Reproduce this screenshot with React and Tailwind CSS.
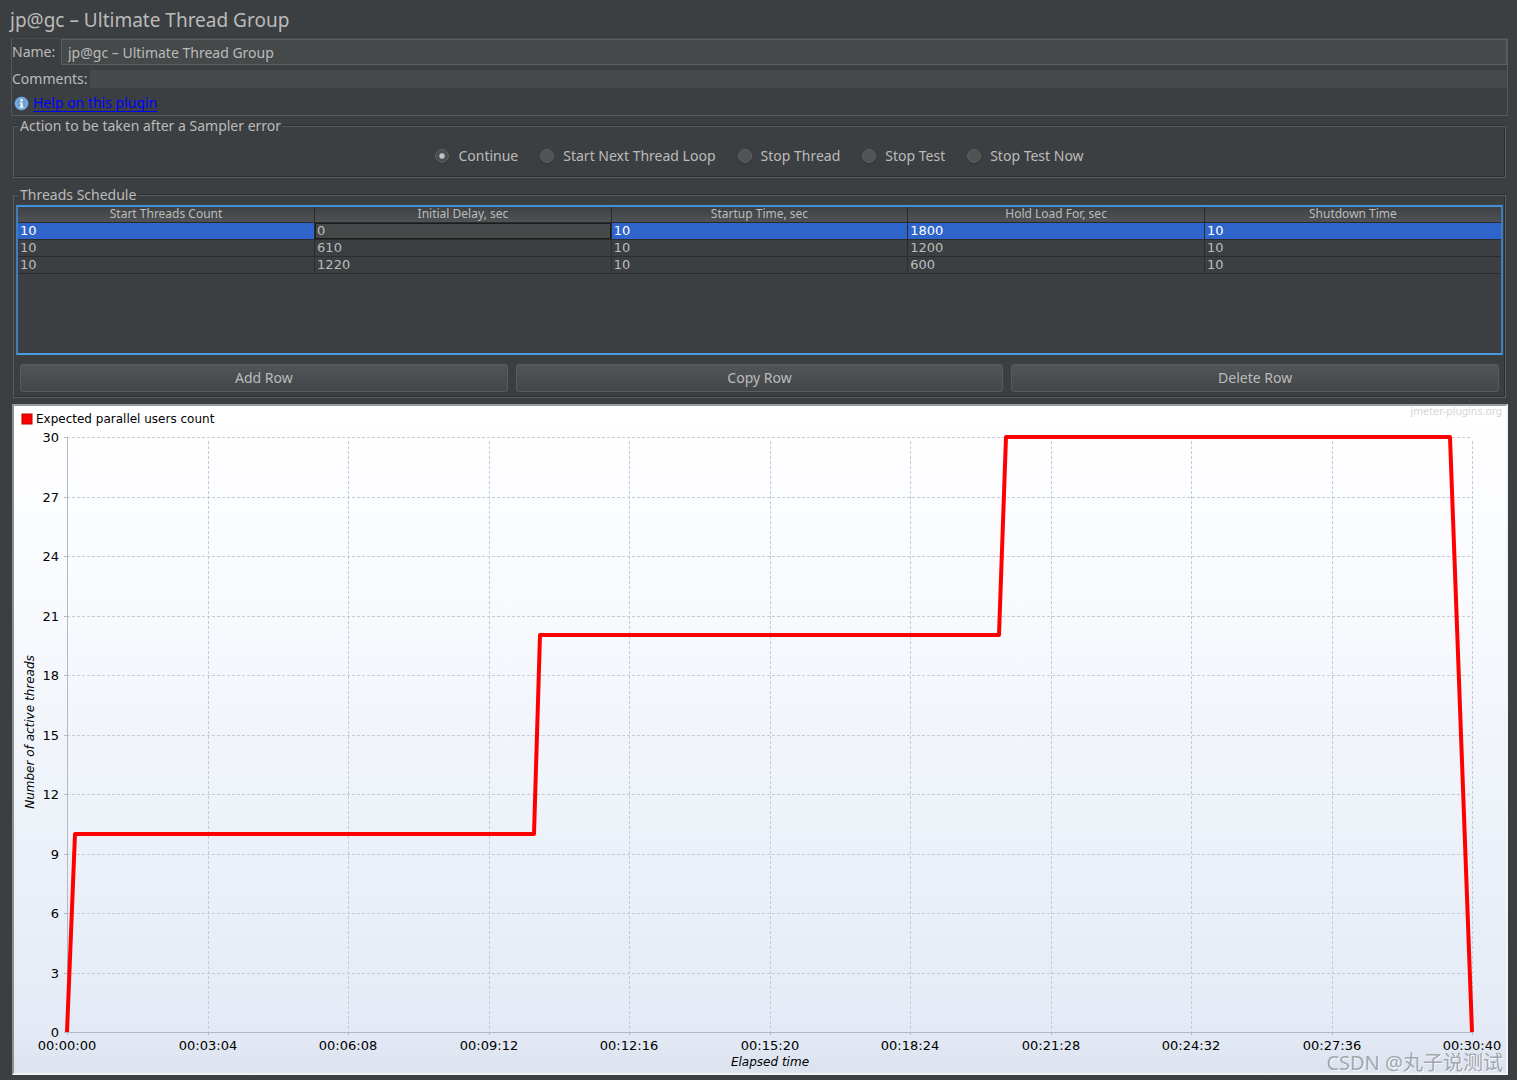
import React, { useState } from 'react';

const errorActions = ['Continue', 'Start Next Thread Loop', 'Stop Thread', 'Stop Test', 'Stop Test Now'];

const columns = ['Start Threads Count', 'Initial Delay, sec', 'Startup Time, sec', 'Hold Load For, sec', 'Shutdown Time'];

const schedule = [
  [10, 0, 10, 1800, 10],
  [10, 610, 10, 1200, 10],
  [10, 1220, 10, 600, 10],
];

// seconds, active threads
const series = [
  [0, 0],
  [10, 10],
  [611, 10],
  [620, 20],
  [1220, 20],
  [1230, 30],
  [1811, 30],
  [1840, 0],
];

const plot = { left: 53, right: 1458, top: 31, bottom: 626 };
const timeLabels = [
  '00:00:00',
  '00:03:04',
  '00:06:08',
  '00:09:12',
  '00:12:16',
  '00:15:20',
  '00:18:24',
  '00:21:28',
  '00:24:32',
  '00:27:36',
  '00:30:40',
];
const threadLabels = [0, 3, 6, 9, 12, 15, 18, 21, 24, 27, 30];

const toX = (seconds) => Math.round(plot.left + ((plot.right - plot.left) * seconds) / 1840);
const toY = (threads) => Math.round(plot.bottom - ((plot.bottom - plot.top) * threads) / 30);

const InfoIcon = () => (
  <svg width="15" height="15" viewBox="0 0 16 16" aria-hidden="true">
    <circle cx="8" cy="8" r="7.5" fill="#4a83bd" />
    <circle cx="8" cy="8" r="6.2" fill="#6fa0d4" stroke="#a9c8e8" strokeWidth="0.8" />
    <circle cx="8" cy="4.6" r="1.3" fill="#fff" />
    <path d="M6.2 6.8h2.9v4.4h1v1.2H6v-1.2h1.1V8h-.9z" fill="#fff" />
  </svg>
);

const Group = ({ title, className, children }) => (
  <fieldset
    className={`mr-[2px] ml-px min-w-0 border border-[#5b5e60] shadow-[inset_-1px_-1px_0_#2c2e30,0_-1px_0_#2c2e30] ${className}`}
  >
    <legend className="ml-1 bg-[#3c3f41] px-[2px] text-sm leading-4">{title}</legend>
    {children}
  </fieldset>
);

const ScheduleTable = () => (
  <div className="mx-[2px] h-[150px] border-2 border-[#3d7fbd] border-t-[#4391d8] border-b-[#4a9be0]">
    <table className="w-full table-fixed border-collapse">
      <thead>
        <tr className="bg-linear-to-b from-[#3f4244] to-[#4e5254]">
          {columns.map((name) => (
            <th
              key={name}
              className="h-[15px] border-r border-b border-[#2b2b2b] p-0 text-center text-xs leading-[14px] font-normal last:border-r-0"
            >
              {name}
            </th>
          ))}
        </tr>
      </thead>
      <tbody>
        {schedule.map((row, r) => (
          <tr key={r} className={r === 0 ? 'bg-[#2f65ca] text-white' : ''}>
            {row.map((value, c) => (
              <td
                key={c}
                className={`border-r border-b border-[#2b2b2b] py-0 pr-0 pl-[2px] font-['DejaVu_Sans',sans-serif] text-[13px] leading-4 last:border-r-0 ${
                  r === 0 && c === 1 ? 'bg-[#45494a] text-[#bbbbbb] shadow-[inset_0_0_0_1px_#1c1c1c]' : ''
                }`}
              >
                {value}
              </td>
            ))}
          </tr>
        ))}
      </tbody>
    </table>
  </div>
);

const Chart = () => (
  <svg
    viewBox="0 0 1492 667"
    className="block h-auto w-full font-['DejaVu_Sans',sans-serif]"
    role="img"
    aria-label="Expected parallel users count"
  >
    <defs>
      <linearGradient id="chartBg" x1="0" y1="0" x2="0" y2="1">
        <stop offset="0" stopColor="#ffffff" />
        <stop offset="0.15" stopColor="#fcfdff" />
        <stop offset="0.93" stopColor="#e4ebf6" />
        <stop offset="1" stopColor="#dce2ee" />
      </linearGradient>
    </defs>
    <rect width="1492" height="667" fill="url(#chartBg)" />

    <rect x="8" y="8" width="10" height="10" fill="#ff0000" stroke="#b40000" />
    <text x="22" y="17" className="fill-black text-xs">
      Expected parallel users count
    </text>
    <text x="1488" y="9" textAnchor="end" className="fill-[#d3d5d8] text-[10px]">
      jmeter-plugins.org
    </text>

    {/* grid */}
    {threadLabels.map((n) => (
      <g key={n}>
        {n > 0 && (
          <line x1={plot.left} x2={plot.right} y1={toY(n)} y2={toY(n)} stroke="#c6cad2" strokeDasharray="3 2" shapeRendering="crispEdges" />
        )}
        <line x1={plot.left - 3} x2={plot.left} y1={toY(n)} y2={toY(n)} stroke="#b4bac4" shapeRendering="crispEdges" />
        <text x="45" y={toY(n) + 5} textAnchor="end" className="fill-black text-[13px]">
          {n}
        </text>
      </g>
    ))}
    {timeLabels.map((label, i) => (
      <g key={label}>
        {i > 0 && (
          <line x1={toX(i * 184)} x2={toX(i * 184)} y1={plot.top + 4} y2={plot.bottom} stroke="#c6cad2" strokeDasharray="3 2" shapeRendering="crispEdges" />
        )}
        <line x1={toX(i * 184)} x2={toX(i * 184)} y1={plot.bottom} y2={plot.bottom + 3} stroke="#b4bac4" shapeRendering="crispEdges" />
        <text x={toX(i * 184)} y="644" textAnchor="middle" className="fill-black text-[13px]">
          {label}
        </text>
      </g>
    ))}
    <path
      d={`M${plot.left} ${plot.top}V${plot.bottom}H${plot.right}`}
      fill="none"
      stroke="#b4bac4"
      shapeRendering="crispEdges"
    />

    <polyline
      points={series.map(([t, n]) => `${toX(t)},${toY(n)}`).join(' ')}
      fill="none"
      stroke="#ff0000"
      strokeWidth="4"
      strokeLinejoin="round"
    />

    <text x="756" y="660" textAnchor="middle" className="fill-black text-xs italic">
      Elapsed time
    </text>
    <text transform="translate(20 326) rotate(-90)" textAnchor="middle" className="fill-black text-xs italic">
      Number of active threads
    </text>
  </svg>
);

const App = () => {
  const [name, setName] = useState('jp@gc – Ultimate Thread Group');
  const [comments, setComments] = useState('');
  const [action, setAction] = useState('Continue');

  return (
    <div className="min-h-screen bg-[#3c3f41] pt-2 pr-[9px] pb-[5px] pl-3 font-['Noto_Sans','Noto_Sans_CJK_SC',sans-serif] text-[#bbbbbb]">
      <h1 className="-ml-[2px] h-[30px] text-[19px] leading-6">jp@gc – Ultimate Thread Group</h1>

      <section className="-ml-px h-[78px] border border-[#55585a] border-t-[#484b4d] text-sm">
        <div className="flex items-center">
          <label htmlFor="name" className="w-[49px] leading-[26px]">
            Name:
          </label>
          <input
            id="name"
            value={name}
            onChange={(e) => setName(e.target.value)}
            className="h-[26px] min-w-0 flex-1 border border-[#5b5e60] bg-[#45494a] px-[6px] outline-none"
          />
        </div>
        <div className="mt-1 flex h-5 items-center">
          <label htmlFor="comments" className="w-[78px]">
            Comments:
          </label>
          <input
            id="comments"
            value={comments}
            onChange={(e) => setComments(e.target.value)}
            className="h-[18px] min-w-0 flex-1 bg-[#45494a] outline-none"
          />
        </div>
        <div className="mt-1 flex items-center gap-1 pl-[2px] leading-5">
          <InfoIcon />
          <a href="#help" className="text-[#0000ff] underline underline-offset-3">
            Help on this plugin
          </a>
        </div>
      </section>

      <Group title="Action to be taken after a Sampler error" className="mt-[2px] h-[60px]">
        <div className="flex justify-center gap-[22px] pt-3">
          {errorActions.map((label) => (
            <label key={label} className="flex items-center gap-[9px] text-sm leading-5">
              <input
                type="radio"
                name="on-error"
                checked={action === label}
                onChange={() => setAction(label)}
                className="size-[14px] appearance-none rounded-full border border-[#5e6264] bg-[#4f5355] shadow-[0_1px_1px_#2f3133] checked:bg-radial checked:from-[#c4c4c4] checked:from-25% checked:to-[#4a4d4f] checked:to-40%"
              />
              {label}
            </label>
          ))}
        </div>
      </Group>

      <Group title="Threads Schedule" className="mt-[9px]">
        <div className="mt-[2px]">
          <ScheduleTable />
        </div>
        <div className="grid grid-cols-3 gap-2 px-[6px] pt-[9px] pb-[5px]">
          {['Add Row', 'Copy Row', 'Delete Row'].map((label) => (
            <button
              key={label}
              type="button"
              className="h-7 rounded-[3px] border border-[#595c5e] bg-linear-to-b from-[#515557] to-[#434749] text-sm"
            >
              {label}
            </button>
          ))}
        </div>
      </Group>

      <div className="relative mt-[6px] border-2 border-t-[#9b9b9b] border-r-[#f4f4f4] border-b-[#f4f4f4] border-l-[#8e8e8e]">
        <Chart />
        <span className="absolute right-[3px] bottom-0 text-xl leading-5 text-[#a3a7ad] [text-shadow:1px_1px_0_#f6f7fa]">
          CSDN @丸子说测试
        </span>
      </div>
    </div>
  );
};

export default App;
